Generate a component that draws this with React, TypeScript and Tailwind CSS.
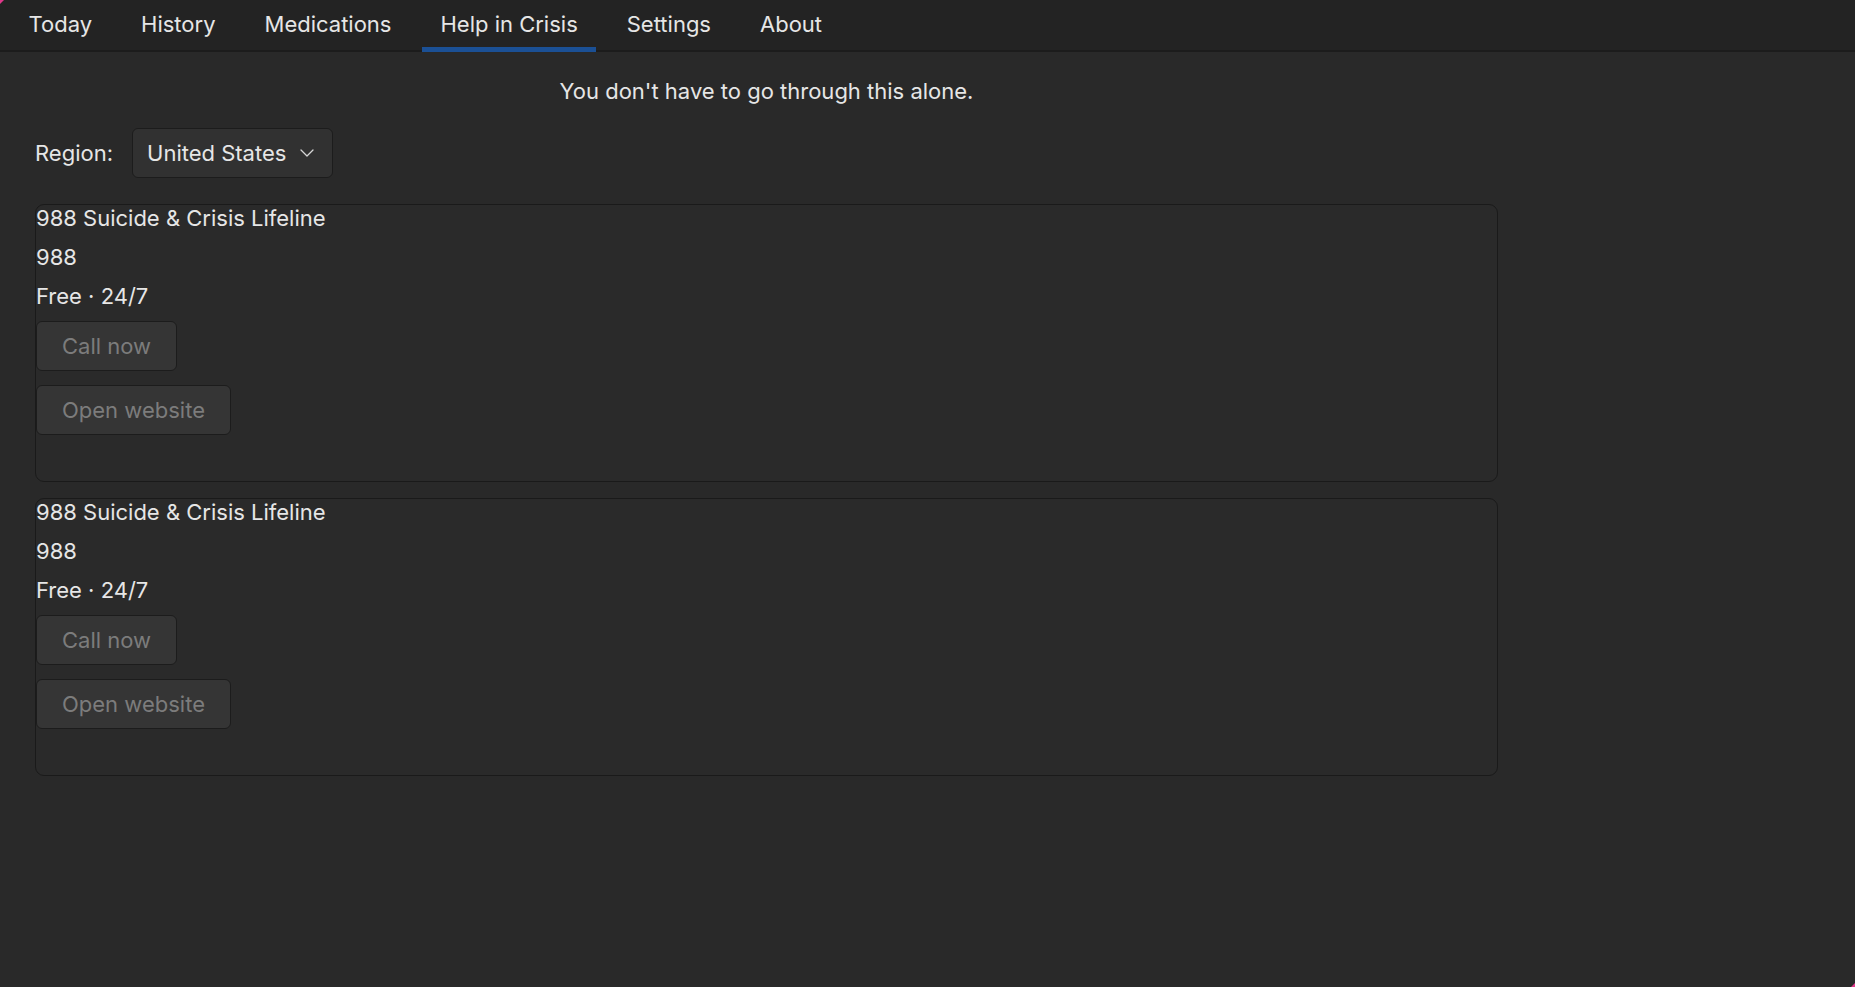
import React from 'react';

const tabs = ['Today', 'History', 'Medications', 'Help in Crisis', 'Settings', 'About'];

const lines = [
  { name: '988 Suicide & Crisis Lifeline', number: '988', hours: 'Free · 24/7' },
  { name: '988 Suicide & Crisis Lifeline', number: '988', hours: 'Free · 24/7' },
];

function Chevron() {
  return (
    <svg width="14" height="8" viewBox="0 0 14 8" fill="none">
      <path d="M1 1l6 6 6-6" stroke="#d6d6d6" strokeWidth="1.3" strokeLinecap="round" strokeLinejoin="round" />
    </svg>
  );
}

function HelpCard({ name, number, hours }: { name: string; number: string; hours: string }) {
  return (
    <div className="h-[278px] rounded-[9px] border border-[#1a1a1a] bg-[#2a2a2a]">
      <div className="-mt-[1px] flex flex-col gap-[11px]">
        <div className="leading-[28px]">{name}</div>
        <div className="leading-[28px]">{number}</div>
        <div className="leading-[28px]">{hours}</div>
      </div>
      <div className="mt-[11px] flex flex-col items-start gap-[14px]">
        <button className="h-[50px] rounded-[6px] border border-[#1c1c1c] bg-[#353535] px-[25px] text-[#7c7c7c]">
          Call now
        </button>
        <button className="h-[50px] rounded-[6px] border border-[#1c1c1c] bg-[#353535] px-[25px] text-[#7c7c7c]">
          Open website
        </button>
      </div>
    </div>
  );
}

export default function App() {
  return (
    <div className="relative h-[987px] w-full overflow-hidden bg-[#292929] text-[22px] text-[#e6e6e6] [font-family:Inter,'Noto_Sans',sans-serif]">
      {/* tab bar */}
      <div className="flex h-[52px] border-b-2 border-[#1c1c1c] bg-[#232323] pl-[10px]">
        <div className="flex gap-[12px]">
          {tabs.map((tab) => (
            <div key={tab} className="relative flex h-full items-center px-[18.5px] pb-[2px]">
              <span>{tab}</span>
              {tab === 'Help in Crisis' && (
                <div className="absolute bottom-[-2px] left-0 right-0 h-[5px] bg-[#1b5095]" />
              )}
            </div>
          ))}
        </div>
      </div>

      <div className="w-[1498px] pl-[35px]">
        <div className="mt-[25px] text-center leading-[28px]">You don't have to go through this alone.</div>

        <div className="mt-[23px] flex items-center gap-[19px]">
          <span>Region:</span>
          <button className="flex h-[50px] w-[201px] items-center justify-between rounded-[6px] border border-[#1c1c1c] bg-[#313131] pl-[14px] pr-[18px] text-[#e6e6e6]">
            <span>United States</span>
            <Chevron />
          </button>
        </div>

        <div className="mt-[26px] flex flex-col gap-[16px]">
          {lines.map((l, i) => (
            <HelpCard key={i} {...l} />
          ))}
        </div>
      </div>

      <div className="absolute left-0 top-0 h-[4px] w-[4px] bg-[#e0388a] [clip-path:polygon(0_0,100%_0,0_100%)]" />
      <div className="absolute bottom-0 right-0 h-[4px] w-[4px] bg-[#e0388a] [clip-path:polygon(100%_0,100%_100%,0_100%)]" />
    </div>
  );
}
